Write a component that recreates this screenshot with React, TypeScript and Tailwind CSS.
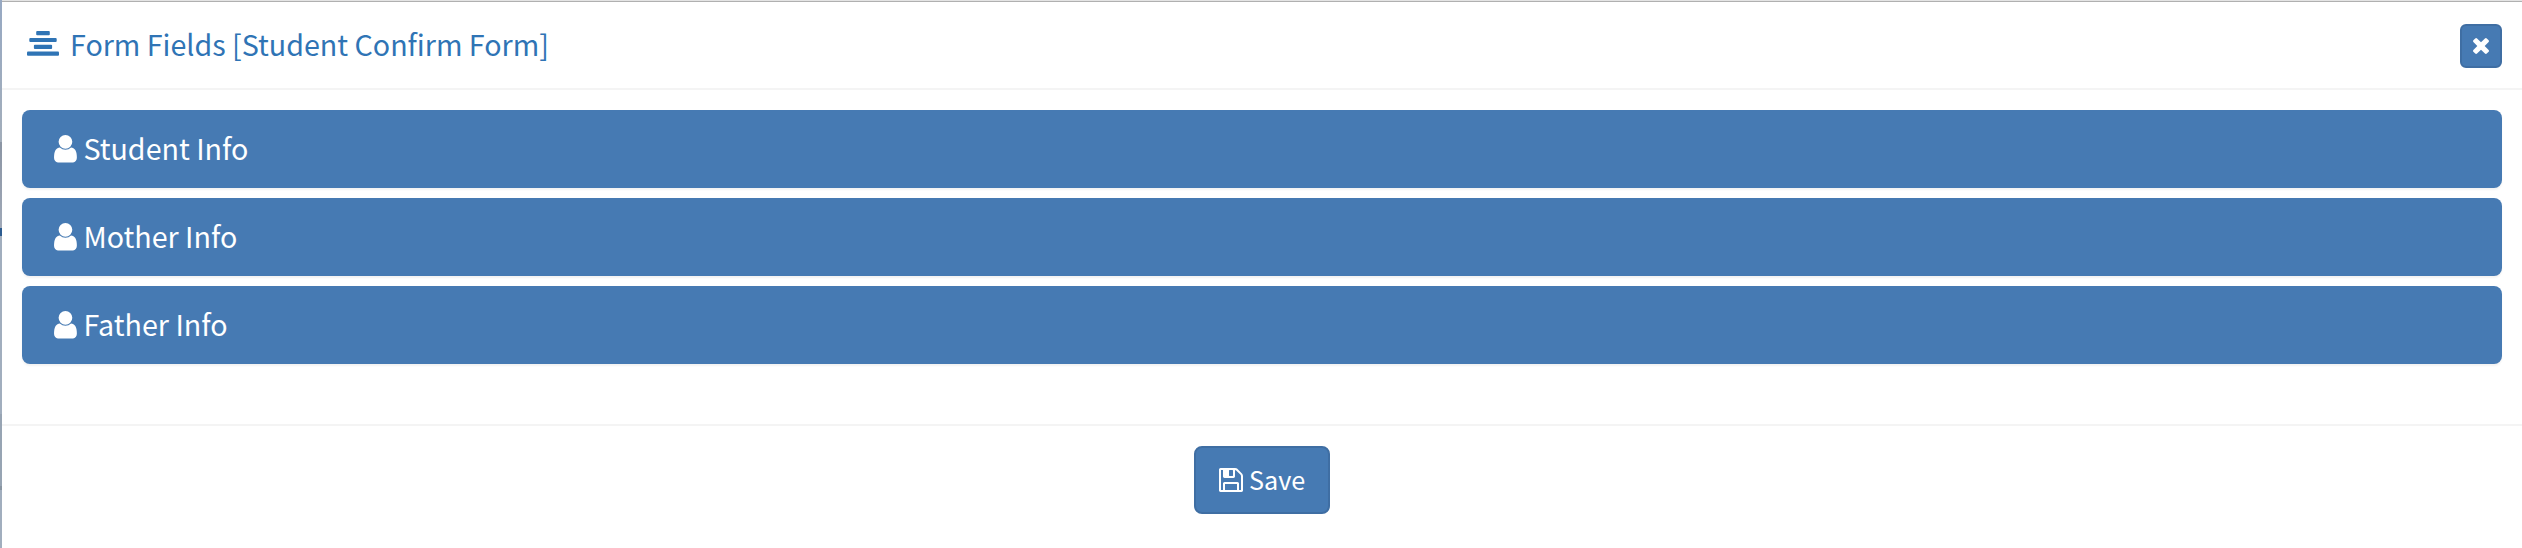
import type { ReactNode } from "react";

type IconProps = {
  viewBox: string;
  className: string;
  d: string;
};

const sections = ["Student Info", "Mother Info", "Father Info"];

const userPath =
  "M1536 1399q0 109-62.5 187t-150.5 78h-854q-88 0-150.5-78t-62.5-187q0-85 8.5-160.5t31.5-152 58.5-131 94-89 134.5-34.5q131 128 313 128t313-128q76 0 134.5 34.5t94 89 58.5 131 31.5 152 8.5 160.5zm-256-887q0 159-112.5 271.5t-271.5 112.5-271.5-112.5-112.5-271.5 112.5-271.5 271.5-112.5 271.5 112.5 112.5 271.5z";
const timesPath =
  "M1490 1322q0 40-28 68l-136 136q-28 28-68 28t-68-28l-294-294-294 294q-28 28-68 28t-68-28l-136-136q-28-28-28-68t28-68l294-294-294-294q-28-28-28-68t28-68l136-136q28-28 68-28t68 28l294 294 294-294q28-28 68-28t68 28l136 136q28 28 28 68t-28 68l-294 294 294 294q28 28 28 68z";
const floppyPath =
  "M512 1536h768v-384h-768v384zm896 0h128v-896q0-14-10-38.5t-20-34.5l-281-281q-10-10-34-20t-39-10v416q0 40-28 68t-68 28h-576q-40 0-68-28t-28-68v-416h-128v1280h128v-416q0-40 28-68t68-28h832q40 0 68 28t28 68v416zm-384-928v-320q0-13-9.5-22.5t-22.5-9.5h-192q-13 0-22.5 9.5t-9.5 22.5v320q0 13 9.5 22.5t22.5 9.5h192q13 0 22.5-9.5t9.5-22.5zm640 32v928q0 40-28 68t-68 28h-1344q-40 0-68-28t-28-68v-1344q0-40 28-68t68-28h928q40 0 88 20t76 48l280 280q28 28 48 76t20 88z";

function Icon({ viewBox, className, d }: IconProps) {
  return (
    <svg viewBox={viewBox} className={className} fill="currentColor" aria-hidden="true">
      <path d={d} />
    </svg>
  );
}

function AlignCenterIcon() {
  return (
    <svg viewBox="0 0 32 25" className="mb-[3px] h-[25px] w-8 shrink-0" fill="currentColor" aria-hidden="true">
      <rect x="9.2" y="0" width="13.6" height="4.2" rx="1" />
      <rect x="2.3" y="6.9" width="27.4" height="4.2" rx="1" />
      <rect x="6.9" y="13.8" width="18.2" height="4.2" rx="1" />
      <rect x="0" y="20.6" width="32" height="4.2" rx="1" />
    </svg>
  );
}

function SectionBar({ children }: { children: ReactNode }) {
  return (
    <button className="flex h-[78px] w-full items-center rounded-lg bg-[#467ab3] pl-8 text-left text-[28.65px] leading-none text-white shadow-[0_2px_2px_rgba(0,0,0,0.05)]">
      <Icon viewBox="256 128 1280 1536" className="h-[27.4px] w-[22.9px] shrink-0" d={userPath} />
      <span className="mb-0.5 ml-[6.5px]">{children}</span>
    </button>
  );
}

export default function App() {
  return (
    <div className='flex h-[548px] w-full bg-white font-["Noto_Sans_CJK_JP","Noto_Sans",sans-serif]'>
      {/* sliver of the dimmed page behind the dialog */}
      <div className="flex w-[2px] shrink-0 flex-col bg-[#a1aebe]">
        <div className="h-[142px] bg-linear-to-b from-[#97a9c3] to-[#a3aebb]" />
        <div className="h-[86px] bg-linear-to-b from-[#8b95a4] to-[#a0a9b8]" />
        <div className="h-2 bg-[#2d5c90]" />
        <div className="h-[178px] bg-[#a1aebe]" />
        <div className="h-[72px] bg-[#97a4b3]" />
        <div className="h-1 bg-[#8995a2]" />
      </div>
      <div className="flex min-w-0 flex-1 flex-col border-t border-[#e4e4e4]">
        <header className="flex h-[89px] items-center justify-between border-t border-b-2 border-t-[#b0b0b0] border-b-[#f4f4f4] pr-5 pl-[25px]">
          <div className="flex items-center text-[#2f74b5]">
            <AlignCenterIcon />
            <h1 className="mb-0.5 ml-[11px] text-[28.65px] leading-none">Form Fields [Student Confirm Form]</h1>
          </div>
          <button
            aria-label="Close"
            className="mt-px flex h-11 w-[42px] items-center justify-center rounded-md border-2 border-[#3f6ea3] bg-[#467ab3] text-white"
          >
            <Icon viewBox="302 366 1188 1188" className="size-4" d={timesPath} />
          </button>
        </header>
        <main className="flex h-[334px] flex-col gap-[10px] pt-5 pr-5 pl-5">
          {sections.map((section) => (
            <SectionBar key={section}>{section}</SectionBar>
          ))}
        </main>
        <footer className="flex justify-center border-t-2 border-[#f4f4f4] pt-5">
          <button className="flex h-[68px] w-[136px] items-center rounded-lg border-2 border-[#3f6ea3] bg-[#467ab3] pl-[23px] text-[25.2px] leading-none text-white">
            <Icon viewBox="128 128 1536 1536" className="size-6 shrink-0" d={floppyPath} />
            <span className="ml-1.5">Save</span>
          </button>
        </footer>
      </div>
    </div>
  );
}
